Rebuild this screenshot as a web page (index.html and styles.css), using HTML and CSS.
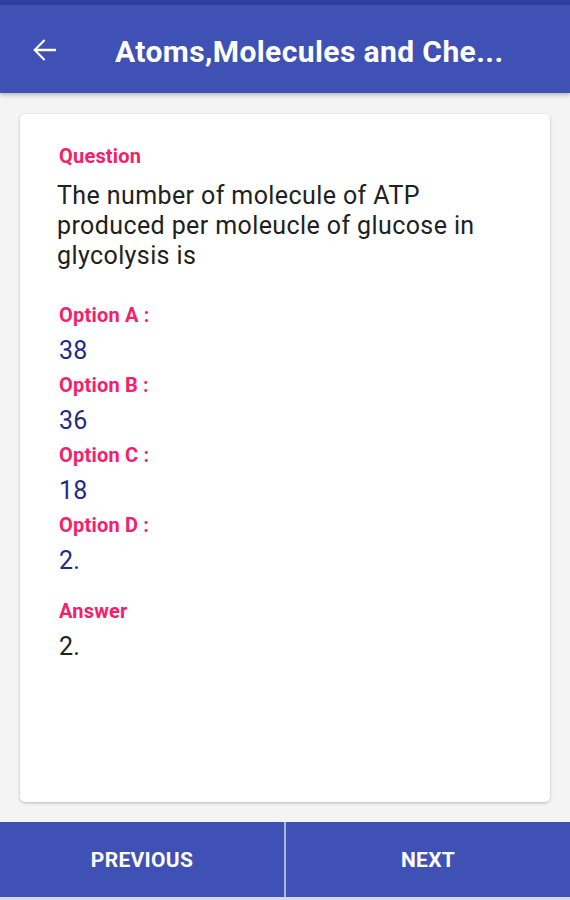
FILE: index.html
```html
<!DOCTYPE html>
<html lang="en">
<head>
    <meta charset="UTF-8">
    <meta name="viewport" content="width=device-width, initial-scale=1.0">
    <title>Atoms,Molecules and Chemical Arithmetic</title>
    <link rel="stylesheet" href="styles.css">
</head>
<body>
    <div class="status-bar"></div>
    <header class="app-bar">
        <span class="back">
            <svg viewBox="0 0 24 24" width="36" height="36"><path d="M20 11.2H7.6l5.3-5.3-1-1L4.8 12l7.1 7.1 1-1-5.3-5.3H20z" fill="#fff"/></svg>
        </span>
        <h1 class="title">Atoms,Molecules and Che...</h1>
    </header>

    <main class="content">
        <div class="card">
            <div class="label">Question</div>
            <p class="question">The number of molecule of ATP produced per moleucle of glucose in glycolysis is</p>

            <div class="options">
                <div class="label">Option A :</div>
                <div class="value">38</div>
                <div class="label">Option B :</div>
                <div class="value">36</div>
                <div class="label">Option C :</div>
                <div class="value">18</div>
                <div class="label">Option D :</div>
                <div class="value">2.</div>
            </div>

            <div class="label answer-label">Answer</div>
            <div class="value answer">2.</div>
        </div>
    </main>

    <footer class="nav">
        <button>PREVIOUS</button>
        <button>NEXT</button>
    </footer>
    <div class="nav-strip"></div>
</body>
</html>
```

FILE: styles.css
```css
body {
    margin: 0;
    padding: 0;
    font-family: Roboto, 'Liberation Sans', sans-serif;
    background-color: #f4f4f4;
    height: 100vh;
    display: flex;
    flex-direction: column;
}
.status-bar {
    height: 5px;
    background-color: #303f9f;
}
.app-bar {
    height: 88px;
    background-color: #3f51b5;
    display: flex;
    align-items: center;
    box-shadow: 0 2px 4px rgba(0, 0, 0, 0.25);
    position: relative;
    z-index: 1;
}
.back {
    display: flex;
    margin-left: 26px;
    margin-top: 2px;
}
.title {
    margin: 4px 0 0 53px;
    color: #fff;
    font-size: 30px;
    font-weight: 700;
    letter-spacing: 0.4px;
    white-space: nowrap;
}
.content {
    flex: 1;
    display: flex;
    padding: 21px 20px 20px;
}
.card {
    flex: 1;
    background-color: #fff;
    border-radius: 5px;
    box-shadow: 0 1px 3px rgba(0, 0, 0, 0.25);
    padding: 25px 52px 0 39px;
}
.label {
    color: #f5206a;
    font-size: 20px;
    font-weight: 700;
    letter-spacing: 0.2px;
    line-height: 35px;
}
.question {
    margin: 7px 0 0 -2px;
    color: #212121;
    font-size: 25px;
    letter-spacing: 0.4px;
    line-height: 30px;
}
.options {
    margin-top: 27px;
}
.value {
    color: #1f2a8c;
    font-size: 25px;
    line-height: 35px;
    letter-spacing: 0.3px;
}
.answer-label {
    margin-top: 16px;
}
.answer {
    color: #222;
}
.nav {
    height: 75px;
    display: grid;
    grid-template-columns: 284px 1fr;
    gap: 2px;
    background-color: #aeb5dc;
}
.nav button {
    border: none;
    background-color: #3f51b5;
    color: #fff;
    font-family: Roboto, 'Liberation Sans', sans-serif;
    font-size: 21px;
    font-weight: 700;
    letter-spacing: 0.3px;
    padding: 0;
}
.nav-strip {
    height: 3px;
    background-color: #d6d8e4;
}
```
